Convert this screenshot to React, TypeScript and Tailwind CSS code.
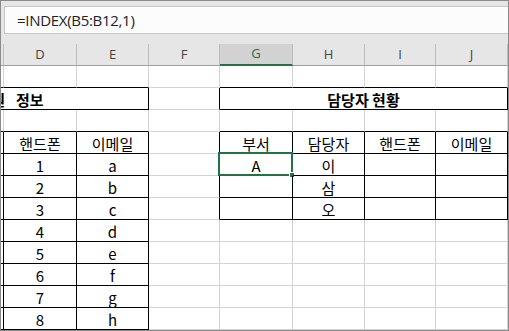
import React from "react";

const COLS = ["B", "C", "D", "E", "F", "G", "H", "I", "J"];
const LEFT = ["B", "C", "D", "E"];
const RIGHT = ["G", "H", "I", "J"];

type Cell = {
  col: string;
  text?: React.ReactNode;
  span?: number;
  bold?: boolean;
  r: boolean; // black right edge
  b: boolean; // black bottom edge
  selected?: boolean;
  shift?: boolean;
};

function plainRow(
  texts: Record<string, string>,
  leftR: boolean,
  leftB: boolean,
  rightR: boolean,
  rightB: boolean,
  fR: boolean
): Cell[] {
  return COLS.map((col) => {
    if (LEFT.includes(col)) return { col, text: texts[col], r: leftR, b: leftB };
    if (RIGHT.includes(col)) return { col, text: texts[col], r: rightR, b: rightB, selected: texts.sel === col };
    return { col, text: texts[col], r: fR, b: false };
  });
}

const ROWS: Cell[][] = [
  plainRow({}, false, true, false, true, false),
  [
    {
      col: "B",
      text: (
        <>
          직원<span className="ml-[11px]">정보</span>
        </>
      ),
      span: 4,
      bold: true,
      r: true,
      b: true,
      shift: true,
    },
    { col: "F", r: true, b: false },
    { col: "G", text: "담당자 현황", span: 4, bold: true, r: true, b: true },
  ],
  plainRow({}, false, true, false, true, false),
  plainRow({ D: "핸드폰", E: "이메일", G: "부서", H: "담당자", I: "핸드폰", J: "이메일" }, true, true, true, true, true),
  plainRow({ D: "1", E: "a", G: "A", H: "이", sel: "G" }, true, true, true, true, true),
  plainRow({ D: "2", E: "b", H: "삼" }, true, true, true, true, true),
  plainRow({ D: "3", E: "c", H: "오" }, true, true, true, true, true),
  plainRow({ D: "4", E: "d" }, true, true, false, false, false),
  plainRow({ D: "5", E: "e" }, true, true, false, false, false),
  plainRow({ D: "6", E: "f" }, true, true, false, false, false),
  plainRow({ D: "7", E: "g" }, true, true, false, false, false),
  plainRow({ D: "8", E: "h" }, true, true, false, false, false),
];

function GridCell({ cell }: { cell: Cell }) {
  return (
    <div
      className={[
        "relative flex h-[22px] items-center justify-center whitespace-nowrap border-r border-b text-[15px] leading-none text-black",
        cell.r ? "border-r-black" : "border-r-[#d4d4d4]",
        cell.b ? "border-b-black" : "border-b-[#d4d4d4]",
        cell.bold ? "font-bold" : "font-normal",
        cell.span === 4 ? "col-span-4" : "",
        cell.shift ? "pl-[13px]" : "",
      ].join(" ")}
    >
      <span className="pt-[1px]">{cell.text}</span>
      {cell.selected && (
        <>
          <div className="pointer-events-none absolute -left-[2px] -top-[2px] h-[24px] w-[75px] border-2 border-[#217346]" />
          <div className="absolute -bottom-[3px] -right-[3px] h-[6px] w-[6px] border border-white bg-[#217346]" />
        </>
      )}
    </div>
  );
}

export default function App() {
  return (
    <div className="h-[331px] w-[509px] overflow-hidden border border-[#8a8a8a] bg-[#e6e6e6] font-['Open_Sans',sans-serif]">
      {/* formula bar */}
      <div className="ml-[3px] mt-[5px] flex h-[28px] items-center border border-r-0 border-[#c6c6c6] bg-[#fcfcfc] pl-[12px] text-[15px] tracking-[-0.3px] text-[#222]">
        =INDEX(B5:B12,1)
      </div>

      <div className="mt-[10px] -ml-[141px] grid w-[650px] grid-cols-[72px_72px_73px_72px_71px_73px_72px_71px_72px]">
        {/* column headers (B and C are scrolled out of view) */}
        {COLS.map((c, i) =>
          c === "G" ? (
            <div
              key={c}
              className="flex h-[22px] items-center justify-center border-r border-b-2 border-r-[#bdbdbd] border-b-[#217346] bg-[#d2d2d2] text-[13px] text-[#217346]"
            >
              {c}
            </div>
          ) : (
            <div
              key={c}
              className="flex h-[22px] items-center justify-center border-r border-b border-r-[#bdbdbd] border-b-[#9e9e9e] text-[13px] text-[#444]"
            >
              {i < 2 ? "" : c}
            </div>
          )
        )}

        {/* cells */}
        <div className="col-span-9 grid grid-cols-subgrid bg-white font-['Noto_Sans_CJK_KR',sans-serif]">
          {ROWS.map((row, i) => (
            <React.Fragment key={i}>
              {row.map((cell) => (
                <GridCell key={cell.col} cell={cell} />
              ))}
            </React.Fragment>
          ))}
        </div>
      </div>
    </div>
  );
}
